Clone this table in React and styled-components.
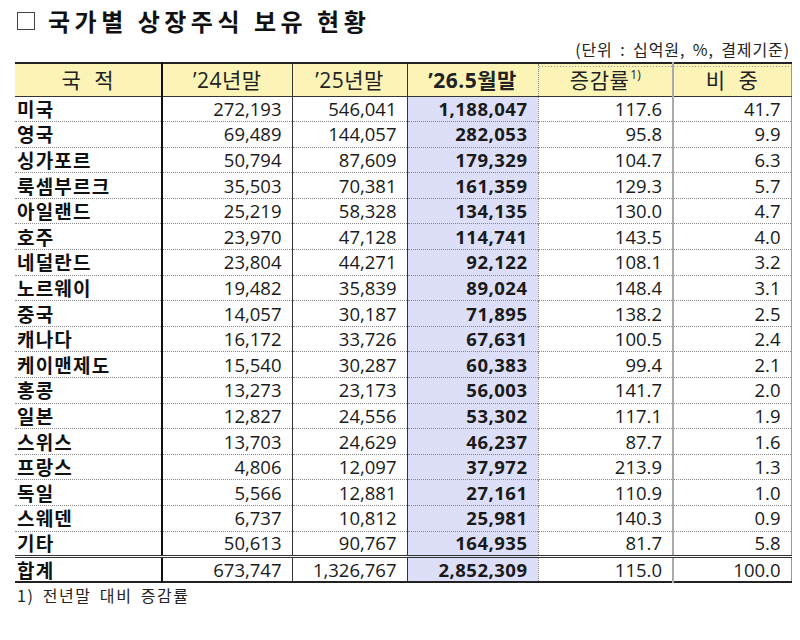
import React from "react";
import styled, { createGlobalStyle } from "styled-components";

const GlobalStyle = createGlobalStyle`
  body {
    margin: 0;
    background: #fff;
    font-family: "Open Sans", "Noto Sans CJK KR", sans-serif;
    color: #1a1a1a;
  }
`;

const Page = styled.div`
  width: 776px;
  padding: 8px 0 0 15px;
`;

const Title = styled.h1`
  display: flex;
  align-items: center;
  gap: 13px;
  margin: 0;
  height: 26px;
  font-family: "Noto Sans CJK KR", sans-serif;
  font-size: 24px;
  line-height: 26px;
  font-weight: 700;
  letter-spacing: 4.5px;
  word-spacing: 0;
  color: #111;
`;

const Box = styled.span`
  width: 18px;
  height: 18px;
  margin-left: 2px;
  border: 1px solid #444;
  box-sizing: border-box;
`;

const Unit = styled.div`
  text-align: right;
  margin: 3px 1px 0 0;
  height: 25px;
  line-height: 25px;
  font-family: "Noto Sans CJK KR", sans-serif;
  font-size: 16px;
  color: #222;
  letter-spacing: 0.9px;
  word-spacing: 3px;
`;

const Table = styled.table`
  width: 776px;
  border-collapse: collapse;
  table-layout: fixed;
  border-top: 2px solid #222;
  border-bottom: 2px solid #222;
  border-right: 1px solid #999;
`;

const HeadRow = styled.tr`
  height: 33px;
  background: #fbf4b6;
  border-bottom: 1px solid #333;
`;

const HeadCell = styled.th`
  padding: 0;
  line-height: 26px;
  font-weight: ${(p) => (p.$bold ? 700 : 400)};
  font-size: 21px;
  text-align: center;
  color: #222;
  letter-spacing: ${(p) => (p.$spaced ? "1px" : "0.5px")};
  word-spacing: ${(p) => (p.$spaced ? "6px" : "0")};
  border-right: ${(p) => p.$edge};
  background: ${(p) =>
    p.$dotted
      ? "repeating-linear-gradient(90deg, #999 0 1px, transparent 1px 3px) 0 2px / 100% 1px no-repeat, #fbf4b6"
      : "transparent"};
  font-family: "Open Sans", "Noto Sans CJK KR", sans-serif;
`;

const Sup = styled.sup`
  font-size: 12px;
  vertical-align: 9px;
  line-height: 0;
  margin-left: 1px;
  letter-spacing: 0;
`;

const Row = styled.tr`
  height: 25.6px;
  border-top: ${(p) => (p.$total ? "3px double #333" : "1px dotted #888")};
`;

const NameCell = styled.td`
  padding: 0 0 0 2px;
  line-height: 20px;
  font-family: "Noto Sans CJK KR", sans-serif;
  font-weight: 700;
  font-size: 19px;
  letter-spacing: 1.2px;
  color: #111;
  border-right: 2px solid #111;
  white-space: nowrap;
`;

const NumCell = styled.td`
  padding: 0 10px 0 0;
  line-height: 20px;
  text-align: right;
  font-size: 18.5px;
  font-weight: ${(p) => (p.$bold ? 700 : 400)};
  letter-spacing: ${(p) => (p.$bold ? "0.5px" : "0")};
  background: ${(p) => (p.$blue ? "#dcdff7" : "transparent")};
  border-right: ${(p) => p.$edge};
  color: #1a1a1a;
`;

const Note = styled.div`
  margin-top: 1px;
  padding-left: 2px;
  line-height: 22px;
  font-family: "Noto Sans CJK KR", sans-serif;
  font-size: 16px;
  letter-spacing: 1.6px;
  word-spacing: 3px;
  color: #222;
`;

const edges = [
  "2px solid #111",
  "1px solid #333",
  "1px solid #333",
  "1px dotted #888",
  "2px solid #aaa",
  "none",
];

const rows = [
  ["미국", "272,193", "546,041", "1,188,047", "117.6", "41.7"],
  ["영국", "69,489", "144,057", "282,053", "95.8", "9.9"],
  ["싱가포르", "50,794", "87,609", "179,329", "104.7", "6.3"],
  ["룩셈부르크", "35,503", "70,381", "161,359", "129.3", "5.7"],
  ["아일랜드", "25,219", "58,328", "134,135", "130.0", "4.7"],
  ["호주", "23,970", "47,128", "114,741", "143.5", "4.0"],
  ["네덜란드", "23,804", "44,271", "92,122", "108.1", "3.2"],
  ["노르웨이", "19,482", "35,839", "89,024", "148.4", "3.1"],
  ["중국", "14,057", "30,187", "71,895", "138.2", "2.5"],
  ["캐나다", "16,172", "33,726", "67,631", "100.5", "2.4"],
  ["케이맨제도", "15,540", "30,287", "60,383", "99.4", "2.1"],
  ["홍콩", "13,273", "23,173", "56,003", "141.7", "2.0"],
  ["일본", "12,827", "24,556", "53,302", "117.1", "1.9"],
  ["스위스", "13,703", "24,629", "46,237", "87.7", "1.6"],
  ["프랑스", "4,806", "12,097", "37,972", "213.9", "1.3"],
  ["독일", "5,566", "12,881", "27,161", "110.9", "1.0"],
  ["스웨덴", "6,737", "10,812", "25,981", "140.3", "0.9"],
  ["기타", "50,613", "90,767", "164,935", "81.7", "5.8"],
];

const total = ["합계", "673,747", "1,326,767", "2,852,309", "115.0", "100.0"];

const widths = [147, 130, 115, 131, 135, 118];

const DataRow = ({ cells, total }) => (
  <Row $total={total}>
    <NameCell>{cells[0]}</NameCell>
    {cells.slice(1).map((v, i) => (
      <NumCell key={i} $edge={edges[i + 1]} $blue={i === 2} $bold={i === 2}>
        {v}
      </NumCell>
    ))}
  </Row>
);

const App = () => {
  return (
    <Page>
      <GlobalStyle />
      <Title>
        <Box />
        국가별 상장주식 보유 현황
      </Title>
      <Unit>(단위 : 십억원, %, 결제기준)</Unit>
      <Table>
        <colgroup>
          {widths.map((w, i) => (
            <col key={i} style={{ width: w }} />
          ))}
        </colgroup>
        <thead>
          <HeadRow>
            <HeadCell $edge={edges[0]} $spaced>국 적</HeadCell>
            <HeadCell $edge={edges[1]}>’24년말</HeadCell>
            <HeadCell $edge={edges[2]}>’25년말</HeadCell>
            <HeadCell $edge={edges[3]} $bold>’26.5월말</HeadCell>
            <HeadCell $edge={edges[4]} $dotted>
              증감률<Sup>1)</Sup>
            </HeadCell>
            <HeadCell $edge={edges[5]} $dotted $spaced>비 중</HeadCell>
          </HeadRow>
        </thead>
        <tbody>
          {rows.map((r) => (
            <DataRow key={r[0]} cells={r} />
          ))}
          <DataRow cells={total} total />
        </tbody>
      </Table>
      <Note>1) 전년말 대비 증감률</Note>
    </Page>
  );
};

export default App;
